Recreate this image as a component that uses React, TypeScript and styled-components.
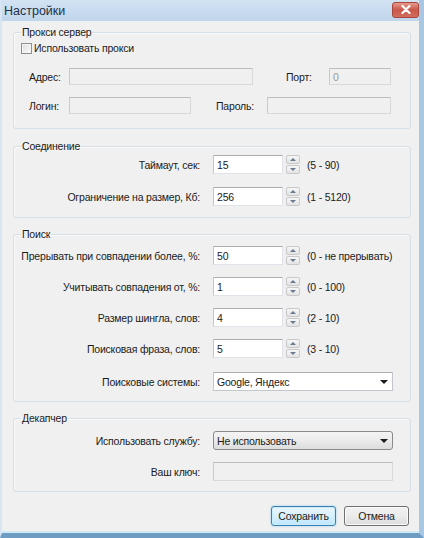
import React, { FC } from 'react'
import styled, { createGlobalStyle } from 'styled-components'

const GlobalStyle = createGlobalStyle`
  html, body {
    margin: 0;
    padding: 0;
    background: #f0f0f0;
  }
  body {
    font-family: 'Liberation Sans', Arial, sans-serif;
    font-size: 10.5px;
    letter-spacing: -0.2px;
    color: #1b1b1b;
  }
`

const Window = styled.div`
  width: 424px;
  height: 538px;
  box-sizing: border-box;
  display: flex;
  flex-direction: column;
  background: #f0f0f0;
  border-left: 2px solid #d8e6f3;
  border-right: 5px solid #a9c7e2;
  border-bottom: 5px solid #6f9cc2;
  box-shadow: inset 0 -2px 0 #cdeaf6;
`

const TitleBar = styled.div`
  height: 21px;
  flex: none;
  display: flex;
  align-items: center;
  justify-content: space-between;
  padding-left: 2px;
  background: linear-gradient(#d3e3f3, #bfd5ec);
`

const Title = styled.span`
  font-size: 12.5px;
  letter-spacing: 0;
  color: #1e2f48;
`

const CloseButton = styled.div`
  width: 27px;
  height: 16px;
  margin-top: -2px;
  display: flex;
  align-items: center;
  justify-content: center;
  border: 1px solid #a8463c;
  border-radius: 3px;
  background: linear-gradient(#e59a8c, #c9564a 50%, #d26e5f);
  box-sizing: border-box;

  & > svg {
    display: block;
  }
`

const Body = styled.div`
  flex: 1;
  display: flex;
  flex-direction: column;
  padding: 4px 8px 0 11px;
`

const Group = styled.fieldset<{ $gap?: number }>`
  margin: ${(p) => p.$gap ?? 0}px 0 0 0;
  padding: 0 0 0 7px;
  min-width: 0;
  border: 1px solid #d5dfe5;
  border-radius: 3px;
  box-shadow: inset 1px 1px 0 #fafafa;
`

const Legend = styled.legend`
  padding: 0 1px;
  line-height: 14px;
  color: #1b1b1b;
`

const Content = styled.div<{ $top: number; $bottom: number }>`
  display: flex;
  flex-direction: column;
  padding: ${(p) => p.$top}px 0 ${(p) => p.$bottom}px 0;
`

const Row = styled.div<{ $mt?: number; $h?: number }>`
  display: flex;
  align-items: center;
  height: ${(p) => p.$h ?? 19}px;
  margin-top: ${(p) => p.$mt ?? 0}px;
`

const Label = styled.span<{ $w: number; $ml?: number; $right?: boolean }>`
  flex: none;
  width: ${(p) => p.$w}px;
  margin-left: ${(p) => p.$ml ?? 0}px;
  text-align: ${(p) => (p.$right ? 'right' : 'left')};
  white-space: nowrap;
`

const FieldLabel = styled(Label).attrs({ $w: 179, $right: true })`
  margin-right: 13px;
`

const Box = styled.div<{ $w: number; $h?: number; $disabled?: boolean }>`
  flex: none;
  box-sizing: border-box;
  width: ${(p) => p.$w}px;
  height: ${(p) => p.$h ?? 19}px;
  display: flex;
  align-items: center;
  padding-left: 3px;
  background: ${(p) => (p.$disabled ? '#f0f0f0' : '#ffffff')};
  border: 1px solid ${(p) => (p.$disabled ? '#d9d9d9' : '#e2e3ea')};
  border-top-color: ${(p) => (p.$disabled ? '#bdbdbd' : '#abadb3')};
  border-left-color: ${(p) => (p.$disabled ? '#cacaca' : '#c3c6cd')};
  color: ${(p) => (p.$disabled ? '#9a9a9a' : '#1b1b1b')};
`

const Spinner = styled.div`
  flex: none;
  width: 14px;
  height: 19px;
  margin-left: 3px;
  display: flex;
  flex-direction: column;
  gap: 1px;
`

const Step = styled.div<{ $down?: boolean }>`
  flex: 1;
  box-sizing: border-box;
  display: flex;
  align-items: center;
  justify-content: center;
  border: 1px solid #c9c9c9;
  border-radius: 2px;
  background: linear-gradient(#f6f6f6, #e3e3e3);

  &::after {
    content: '';
    width: 0;
    height: 0;
    border-left: 3px solid transparent;
    border-right: 3px solid transparent;
    ${(p) => (p.$down ? 'border-top: 3px solid #6b7a8f;' : 'border-bottom: 3px solid #6b7a8f;')}
  }
`

const Range = styled.span`
  margin-left: 7px;
  white-space: nowrap;
`

const Combo = styled.div<{ $button?: boolean }>`
  flex: none;
  box-sizing: border-box;
  width: 180px;
  height: 19px;
  display: flex;
  align-items: center;
  justify-content: space-between;
  padding: 0 4px 0 3px;
  border: 1px solid ${(p) => (p.$button ? '#8a8a8a' : '#c3c6cd')};
  border-top-color: ${(p) => (p.$button ? '#8a8a8a' : '#abadb3')};
  border-radius: ${(p) => (p.$button ? '3px' : '0')};
  background: ${(p) => (p.$button ? 'linear-gradient(#f4f4f4, #ebebeb 50%, #dcdcdc)' : '#ffffff')};

  &::after {
    content: '';
    width: 0;
    height: 0;
    border-left: 4px solid transparent;
    border-right: 4px solid transparent;
    border-top: 4px solid #1b1b1b;
  }
`

const CheckRow = styled.label`
  display: flex;
  align-items: center;
  height: 14px;
  gap: 2px;
`

const CheckBox = styled.span`
  width: 11px;
  height: 11px;
  box-sizing: border-box;
  border: 1px solid #8f8f8f;
  background: linear-gradient(135deg, #dcdcdc, #fbfbfb);
  box-shadow: inset 0 0 0 1px #f4f4f4;
`

const Footer = styled.div`
  display: flex;
  justify-content: flex-end;
  gap: 8px;
  padding: 14px 2px 0 0;
`

const Button = styled.div<{ $default?: boolean }>`
  width: 65px;
  height: 20px;
  box-sizing: border-box;
  display: flex;
  align-items: center;
  justify-content: center;
  border-radius: 3px;
  border: 1px solid ${(p) => (p.$default ? '#3c7fb1' : '#707070')};
  background: ${(p) =>
    p.$default
      ? 'linear-gradient(#eaf6fd, #d9f0fc 50%, #bee6fd)'
      : 'linear-gradient(#f2f2f2, #ebebeb 50%, #dddddd)'};
  box-shadow: ${(p) => (p.$default ? '0 0 2px #7fc6ee, inset 0 0 0 1px #c8ecfc' : 'inset 0 0 0 1px #fbfbfb')};
`

type NumberFieldProps = {
  label: string
  value: string
  range: string
  mt?: number
}

const NumberField: FC<NumberFieldProps> = ({ label, value, range, mt }) => (
  <Row $mt={mt}>
    <FieldLabel>{label}</FieldLabel>
    <Box $w={70}>{value}</Box>
    <Spinner>
      <Step />
      <Step $down />
    </Spinner>
    <Range>{range}</Range>
  </Row>
)

export default function App() {
  return (
    <>
      <GlobalStyle />
      <Window>
        <TitleBar>
          <Title>Настройки</Title>
          <CloseButton>
            <svg width="10" height="9" viewBox="0 0 10 9">
              <path d="M1.5 1 L8.5 8 M8.5 1 L1.5 8" stroke="#ffffff" strokeWidth="2.2" strokeLinecap="round" />
            </svg>
          </CloseButton>
        </TitleBar>

        <Body>
          <Group>
            <Legend>Прокси сервер</Legend>
            <Content $top={2} $bottom={14}>
              <CheckRow>
                <CheckBox />
                <span>Использовать прокси</span>
              </CheckRow>
              <Row $mt={13} $h={17}>
                <Label $w={40} $ml={8}>Адрес:</Label>
                <Box $w={184} $h={17} $disabled />
                <Label $w={43} $ml={33}>Порт:</Label>
                <Box $w={62} $h={17} $disabled>0</Box>
              </Row>
              <Row $mt={12} $h={17}>
                <Label $w={40} $ml={8}>Логин:</Label>
                <Box $w={122} $h={17} $disabled />
                <Label $w={51} $ml={25}>Пароль:</Label>
                <Box $w={124} $h={17} $disabled />
              </Row>
            </Content>
          </Group>

          <Group $gap={10}>
            <Legend>Соединение</Legend>
            <Content $top={2} $bottom={11}>
              <NumberField label="Таймаут, сек:" value="15" range="(5 - 90)" />
              <NumberField label="Ограничение на размер, Кб:" value="256" range="(1 - 5120)" mt={13} />
            </Content>
          </Group>

          <Group $gap={9}>
            <Legend>Поиск</Legend>
            <Content $top={5} $bottom={10}>
              <NumberField label="Прерывать при совпадении более, %:" value="50" range="(0 - не прерывать)" />
              <NumberField label="Учитывать совпадения от, %:" value="1" range="(0 - 100)" mt={12} />
              <NumberField label="Размер шингла, слов:" value="4" range="(2 - 10)" mt={12} />
              <NumberField label="Поисковая фраза, слов:" value="5" range="(3 - 10)" mt={12} />
              <Row $mt={14}>
                <FieldLabel>Поисковые системы:</FieldLabel>
                <Combo>Google, Яндекс</Combo>
              </Row>
            </Content>
          </Group>

          <Group $gap={9}>
            <Legend>Декапчер</Legend>
            <Content $top={6} $bottom={10}>
              <Row>
                <FieldLabel>Использовать службу:</FieldLabel>
                <Combo $button>Не использовать</Combo>
              </Row>
              <Row $mt={12}>
                <FieldLabel>Ваш ключ:</FieldLabel>
                <Box $w={180} $disabled />
              </Row>
            </Content>
          </Group>

          <Footer>
            <Button $default>Сохранить</Button>
            <Button>Отмена</Button>
          </Footer>
        </Body>
      </Window>
    </>
  )
}
